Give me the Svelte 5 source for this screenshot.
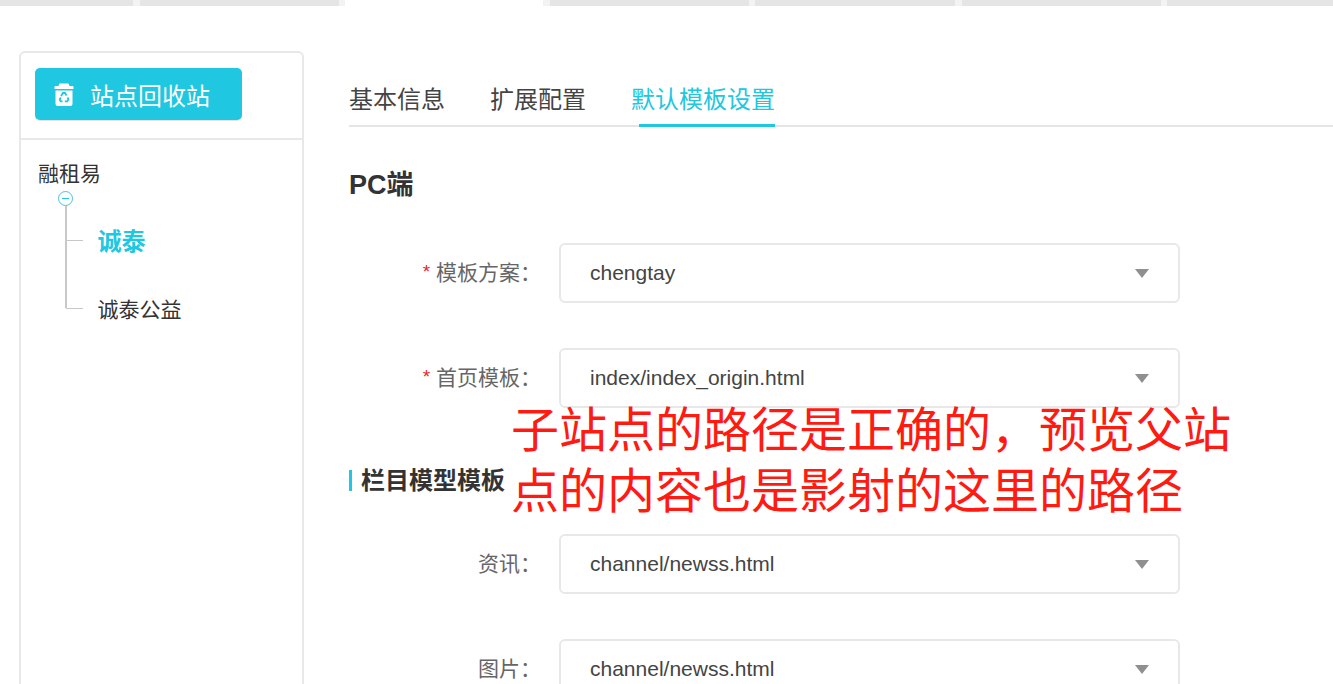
<script lang="ts">
  const strip = [
    { w: 133 },
    { w: 199 },
    { w: 198, active: true },
    { w: 199 },
    { w: 200 },
    { w: 199 },
    { w: 166 }
  ]
  const mainTabs = [
    { label: '基本信息' },
    { label: '扩展配置' },
    { label: '默认模板设置', active: true }
  ]
  const pcFields = [
    { label: '模板方案', value: 'chengtay', required: true },
    { label: '首页模板', value: 'index/index_origin.html', required: true }
  ]
  const channelFields = [
    { label: '资讯', value: 'channel/newss.html' },
    { label: '图片', value: 'channel/newss.html' }
  ]
</script>

{#snippet field(item)}
  <div class="form-row">
    <div class="form-label">
      {#if item.required}<span class="req">*</span>{/if}
      {item.label}：
    </div>
    <div class="select">
      <span>{item.value}</span>
      <i class="caret"></i>
    </div>
  </div>
{/snippet}

<div class="page">
  <div class="strip">
    {#each strip as s}
      <div class="strip-tab" class:active={s.active} style:width="{s.w}px"></div>
    {/each}
  </div>

  <div class="layout">
    <aside class="sidebar">
      <div class="side-head">
        <button class="recycle">
          <svg width="20" height="25" viewBox="0 0 20 25">
            <path fill="#fff" d="M6 1.500h8a1 1 0 0 1 1 .8l.4 1.700H18.500a1 1 0 0 1 1 1V7H.5V5a1 1 0 0 1 1-1h3.100L5 2.300a1 1 0 0 1 1-.8z" />
            <path fill="#fff" d="M1.500 8.500h17v13a2.500 2.500 0 0 1-2.500 2.500H4a2.500 2.500 0 0 1-2.500-2.500z" />
            <g fill="none" stroke="#20c7e0" stroke-width="1.800">
              <path d="M7 14l2-3h2l1.500 2.500" />
              <path d="M13.500 15.500l1 2-1.200 1.800h-2.500" />
              <path d="M8.500 19.300H6.700l-1-1.800 1.200-2" />
            </g>
          </svg>
          <span>站点回收站</span>
        </button>
      </div>
      <div class="tree">
        <div class="tree-root">融租易</div>
        <div class="toggle"><i></i></div>
        <ul class="tree-list">
          <li class="current">诚泰</li>
          <li>诚泰公益</li>
        </ul>
      </div>
    </aside>

    <main class="main">
      <nav class="tabs">
        {#each mainTabs as t}
          <div class="tab" class:active={t.active}><span>{t.label}</span></div>
        {/each}
      </nav>

      <h2 class="pc-title">PC端</h2>
      {#each pcFields as f}
        {@render field(f)}
      {/each}

      <h3 class="section-title">栏目模型模板</h3>
      {#each channelFields as f}
        {@render field(f)}
      {/each}
    </main>
  </div>

  <div class="note">子站点的路径是正确的，预览父站<br />点的内容也是影射的这里的路径</div>
</div>

<style>
  :global(body) {
    margin: 0;
    background: #fff;
  }

  .page {
    position: relative;
    width: 1333px;
    height: 684px;
    overflow: hidden;
    font-family: "Liberation Sans", "Noto Sans CJK SC", sans-serif;
    color: #333;
  }

  .strip {
    display: flex;
    gap: 6.500px;
    height: 6px;
    background: #f3f3f3;
  }
  .strip-tab {
    flex: none;
    background: #e5e5e5;
  }
  .strip-tab.active {
    background: #fff;
  }

  .layout {
    display: flex;
    padding: 45px 0 0 19px;
  }

  .sidebar {
    flex: none;
    box-sizing: border-box;
    width: 285px;
    height: 700px;
    border: 2px solid #e8e8e8;
    border-radius: 6px;
  }
  .side-head {
    box-sizing: border-box;
    height: 87px;
    padding: 15px 0 0 14px;
    border-bottom: 2px solid #e8e8e8;
  }
  .recycle {
    display: flex;
    align-items: center;
    gap: 16px;
    box-sizing: border-box;
    width: 207px;
    height: 52px;
    padding: 1px 0 0 19px;
    border: 0;
    box-shadow: 0 1px 0 #e3e3e3;
    border-radius: 5px;
    background: #20c7e0;
    color: #fff;
    font: inherit;
    font-size: 24px;
  }

  .tree {
    padding: 19px 0 0 17px;
    color: #333;
    font-size: 21px;
  }
  .tree-root {
    line-height: 30px;
  }
  .toggle {
    display: flex;
    align-items: center;
    justify-content: center;
    box-sizing: border-box;
    width: 15px;
    height: 15px;
    margin: 2px 0 0 20px;
    border: 1px solid #4fbfe0;
    border-radius: 50%;
  }
  .toggle i {
    width: 7px;
    height: 1px;
    background: #20c7e0;
  }
  .tree-list {
    position: relative;
    margin: 0;
    padding: 0 0 0 59.500px;
    list-style: none;
  }
  .tree-list::before {
    content: "";
    position: absolute;
    left: 27px;
    top: 0;
    height: 102px;
    width: 2px;
    background: #c8c8c8;
  }
  .tree-list li {
    position: relative;
    box-sizing: border-box;
    height: 68px;
    padding-top: 2px;
    line-height: 68px;
  }
  .tree-list li::before {
    content: "";
    position: absolute;
    left: -31.500px;
    top: 34px;
    width: 17px;
    height: 1px;
    background: #c8c8c8;
  }
  .tree-list .current {
    color: #20c7e0;
    font-size: 24px;
    font-weight: 700;
  }

  .main {
    flex: 1;
    margin-left: 45px;
  }

  .tabs {
    display: flex;
    gap: 45px;
    height: 76px;
    box-sizing: border-box;
    border-bottom: 2px solid #e5e5e5;
    padding-top: 31px;
    font-size: 24px;
    line-height: 36px;
    color: #444;
  }
  .tab.active {
    position: relative;
    color: #20c7e0;
  }
  .tab.active::after {
    content: "";
    position: absolute;
    left: 8px;
    right: 0;
    bottom: -2px;
    height: 3px;
    background: #20c7e0;
  }

  .pc-title {
    margin: 40px 0 40px;
    font-size: 27px;
    line-height: 36px;
    font-weight: 700;
    color: #333;
  }

  .form-row {
    display: flex;
    align-items: center;
    height: 60px;
    margin-bottom: 45px;
  }
  .form-label {
    flex: none;
    width: 192px;
    padding-bottom: 4px;
    font-size: 21px;
    color: #666;
    text-align: right;
    white-space: nowrap;
  }
  .req {
    color: #e8262a;
    font-size: 19px;
    vertical-align: 2px;
  }
  .select {
    flex: none;
    display: flex;
    align-items: center;
    justify-content: space-between;
    box-sizing: border-box;
    width: 621px;
    height: 60px;
    margin-left: 18px;
    padding: 0 30px 0 29px;
    border: 2px solid #e8e8e8;
    border-radius: 6px;
    font-size: 21px;
    color: #444;
  }
  .caret {
    width: 0;
    height: 0;
    margin-right: -1px;
    border-style: solid;
    border-width: 9px 7.500px 0;
    border-color: #8f8f8f transparent transparent;
  }

  .section-title {
    position: relative;
    margin: 55px 0 35px;
    padding-left: 12px;
    font-size: 24px;
    line-height: 36px;
    font-weight: 700;
    color: #333;
  }
  .section-title::before {
    content: "";
    position: absolute;
    left: 0;
    top: 7px;
    width: 3px;
    height: 21px;
    background: #20c7e0;
  }

  .note {
    position: absolute;
    left: 511px;
    top: 396px;
    font-size: 48px;
    line-height: 61px;
    color: #ff1a12;
    white-space: nowrap;
    font-family: "Noto Sans CJK SC", sans-serif;
  }
</style>
